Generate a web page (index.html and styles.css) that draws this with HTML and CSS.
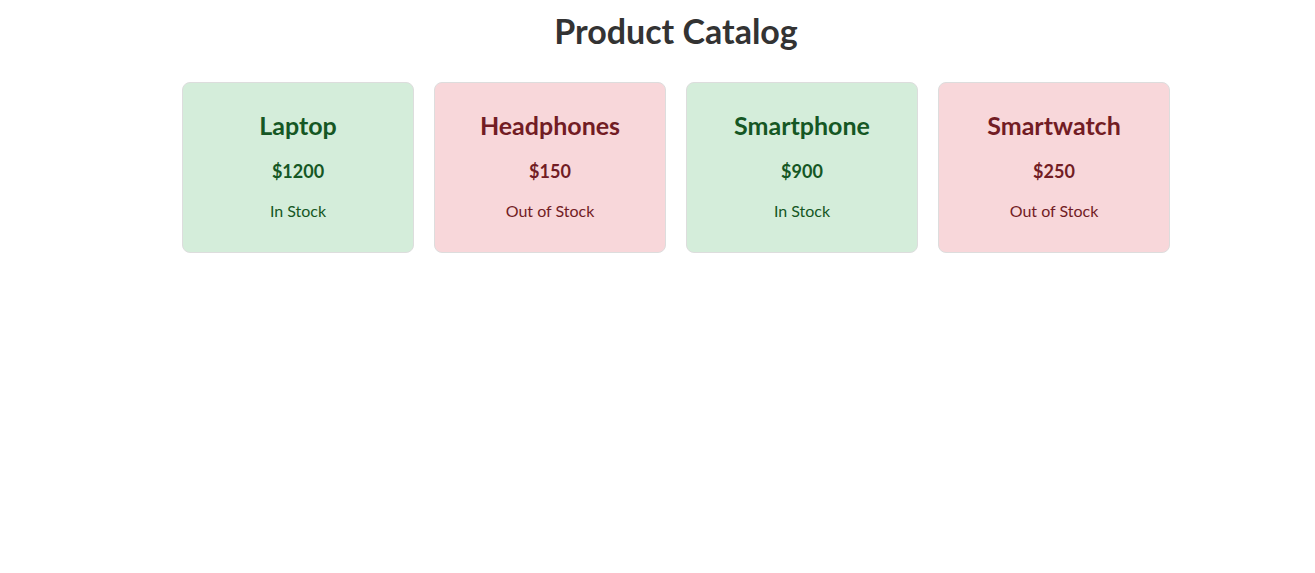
FILE: index.html
```html
<!DOCTYPE html>
<html lang="en">
<head>
<meta charset="utf-8">
<title>Product Catalog</title>
<link rel="stylesheet" href="styles.css">
</head>
<body>
<main class="page">
  <h1 class="page-title">Product Catalog</h1>
  <div class="catalog">
    <div class="card card--in">
      <h2 class="card-name">Laptop</h2>
      <p class="card-price">$1200</p>
      <p class="card-stock">In Stock</p>
    </div>
    <div class="card card--out">
      <h2 class="card-name">Headphones</h2>
      <p class="card-price">$150</p>
      <p class="card-stock">Out of Stock</p>
    </div>
    <div class="card card--in">
      <h2 class="card-name">Smartphone</h2>
      <p class="card-price">$900</p>
      <p class="card-stock">In Stock</p>
    </div>
    <div class="card card--out">
      <h2 class="card-name">Smartwatch</h2>
      <p class="card-price">$250</p>
      <p class="card-stock">Out of Stock</p>
    </div>
  </div>
</main>
</body>
</html>
```

FILE: styles.css
```css
* { box-sizing: border-box; }

html, body {
  margin: 0;
  padding: 0;
  background: #ffffff;
}

body {
  font-family: "Lato", "Segoe UI", "Liberation Sans", sans-serif;
  color: #333333;
}

.page {
  padding-left: 37px;
}

.page-title {
  margin: 11px 0 31px;
  font-size: 34px;
  line-height: 40px;
  font-weight: 700;
  text-align: center;
  color: #333333;
}

.catalog {
  display: flex;
  justify-content: center;
  gap: 20px;
}

.card {
  width: 232px;
  height: 171px;
  padding: 20px 16px;
  border: 1px solid #dddddd;
  border-radius: 8px;
  text-align: center;
}

.card--in {
  background: #d4edda;
  color: #155724;
}

.card--out {
  background: #f8d7da;
  color: #721c24;
}

.card-name {
  margin: 6px 0 0;
  font-size: 25px;
  line-height: 32px;
  font-weight: 700;
}

.card-price {
  margin: 18px 0 0;
  font-size: 18px;
  line-height: 24px;
  font-weight: 700;
}

.card-stock {
  margin: 17px 0 0;
  font-size: 16px;
  line-height: 22px;
  font-weight: 400;
}
```
